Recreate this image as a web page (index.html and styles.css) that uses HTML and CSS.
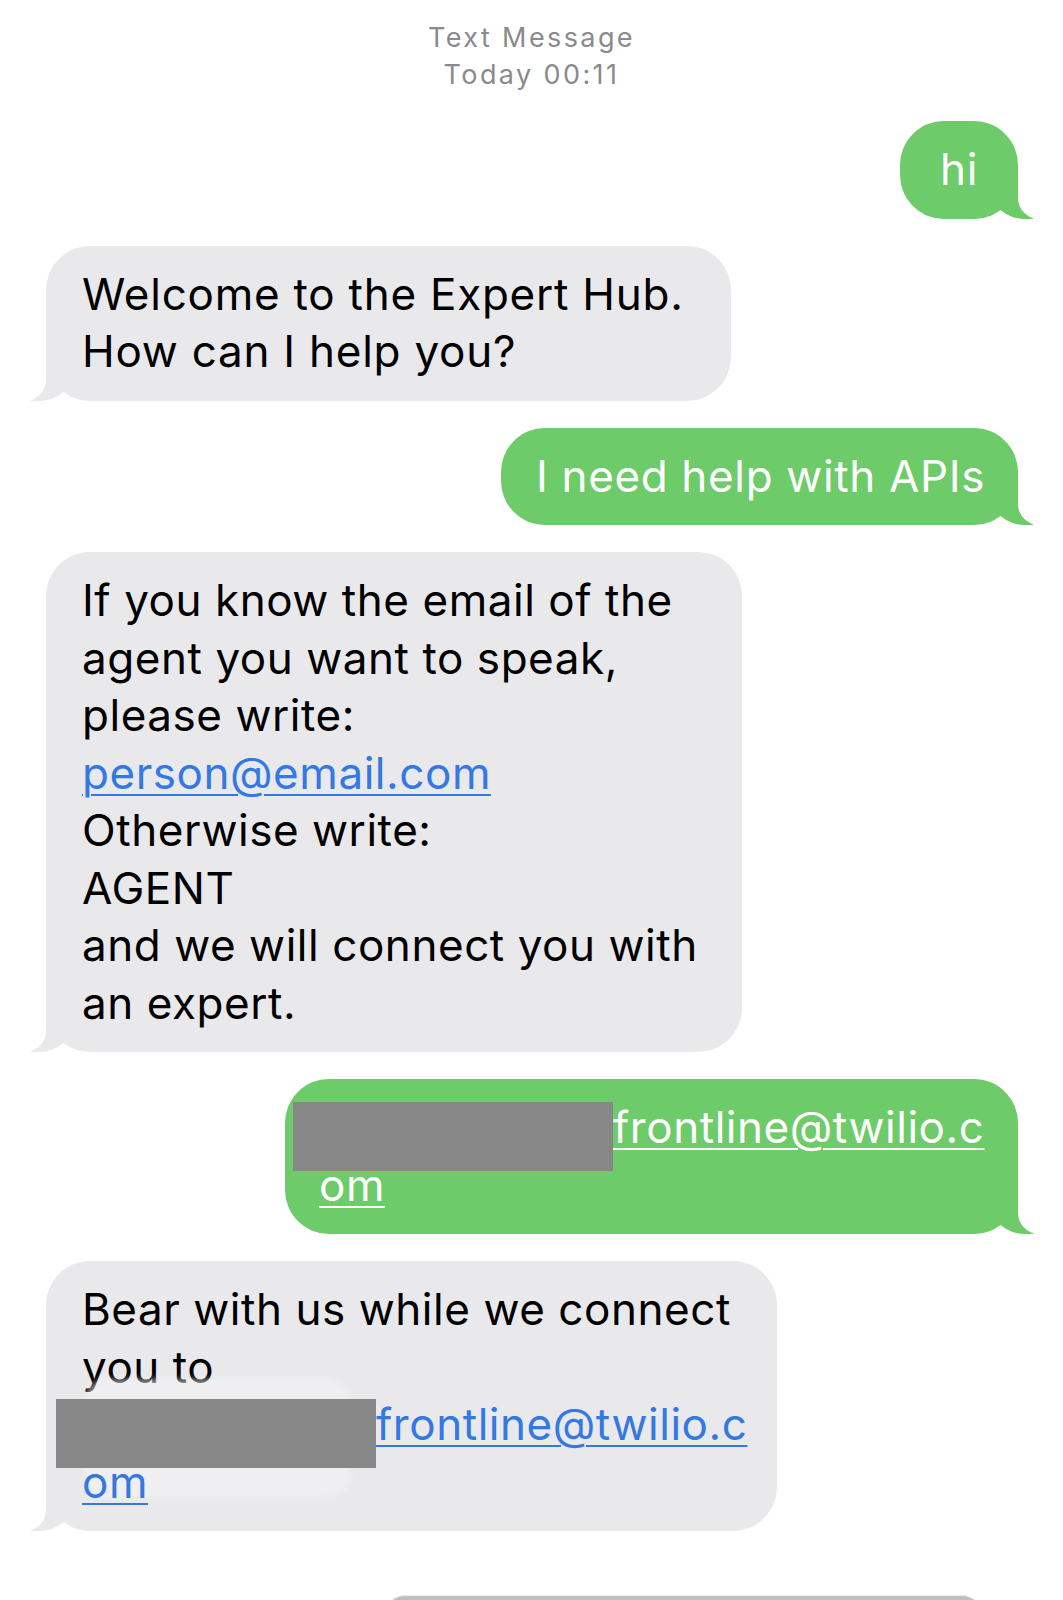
FILE: index.html
```html
<!DOCTYPE html>
<html lang="en">
<head>
    <meta charset="UTF-8">
    <meta name="viewport" content="width=device-width, initial-scale=1.0">
    <title>Text Message</title>
    <link rel="stylesheet" href="styles.css">
</head>
<body>
    <div class="screen">
        <div class="header">
            <div>Text Message</div>
            <div>Today 00:11</div>
        </div>
        <div class="thread">
            <div class="bubble sent hi">hi</div>
            <div class="bubble received welcome">Welcome to the Expert Hub.<br>How can I help you?</div>
            <div class="bubble sent apis">I need help with APIs</div>
            <div class="bubble received options">If you know the email of the<br>agent you want to speak,<br>please write:<br><a class="link">person@email.com</a><br>Otherwise write:<br>AGENT<br>and we will connect you with<br>an expert.</div>
            <div class="bubble sent address"><span class="redact"></span><a class="link">frontline@twilio.c<br>om</a></div>
            <div class="bubble received connect"><span class="smudge"></span>Bear with us while we connect<br>you to<br><span class="redact"></span><a class="link">frontline@twilio.c<br>om</a></div>
            <div class="next"></div>
        </div>
    </div>
</body>
</html>
```

FILE: styles.css
```css
html, body {
    margin: 0;
    padding: 0;
    background-color: #fff;
}
body {
    font-family: "Inter", "Liberation Sans", sans-serif;
    overflow: hidden;
}
.screen {
    width: 1063px;
    height: 1600px;
    overflow: hidden;
}
.header {
    padding-top: 19px;
    text-align: center;
    font-size: 27px;
    line-height: 37px;
    letter-spacing: 2.4px;
    color: #8a8a8e;
}
.thread {
    display: flex;
    flex-direction: column;
    gap: 27px;
    padding-top: 28px;
}
.bubble {
    position: relative;
    box-sizing: border-box;
    padding: 20px 0 20px 36px;
    border-radius: 44px;
    font-size: 44px;
    line-height: 57.5px;
    letter-spacing: 0.55px;
    white-space: nowrap;
}
.bubble::before,
.bubble::after {
    content: "";
    position: absolute;
    bottom: 0;
    height: 52px;
}
.received {
    align-self: flex-start;
    margin-left: 46px;
    background-color: #e9e9eb;
    color: #000;
}
.received::before {
    left: -15px;
    width: 42px;
    background-color: #e9e9eb;
    border-bottom-right-radius: 34px 30px;
}
.received::after {
    left: -55px;
    width: 55px;
    background-color: #fff;
    border-bottom-right-radius: 21px;
}
.sent {
    align-self: flex-end;
    margin-right: 45px;
    background-color: #6dcb69;
    color: #fff;
    padding-left: 35px;
}
.sent::before {
    right: -15px;
    width: 42px;
    background-color: #6dcb69;
    border-bottom-left-radius: 34px 30px;
}
.sent::after {
    right: -55px;
    width: 55px;
    background-color: #fff;
    border-bottom-left-radius: 21px;
}
.hi {
    width: 118px;
    padding-left: 0;
    text-align: center;
}
.welcome { width: 685px; letter-spacing: 0.75px; }
.apis { width: 517px; letter-spacing: 0.65px; }
.options { width: 696px; }
.address { width: 733px; padding-left: 34px; }
.connect { width: 731px; }

.link {
    position: relative;
    color: #3478e4;
    text-decoration: underline;
    text-decoration-thickness: 2px;
    text-underline-offset: 5px;
}
.sent .link {
    color: #fff;
}
.redact {
    position: relative;
    display: inline-block;
    width: 294px;
    height: 0;
}
.redact::before {
    content: "";
    position: absolute;
    left: -26px;
    right: 0;
    top: -41px;
    height: 69px;
    background-color: #878787;
}
.smudge {
    position: absolute;
    left: 38px;
    top: 118px;
    width: 266px;
    height: 118px;
    border-radius: 24px;
    background-color: #f3f4f6;
    opacity: 0.6;
    filter: blur(3px);
}
.next {
    align-self: flex-end;
    width: 597px;
    height: 40px;
    margin: 37px 81px 0 0;
    border-radius: 20px 20px 0 0;
    border-top: 1px solid #ededed;
    background-color: #bfbfbf;
}
```
